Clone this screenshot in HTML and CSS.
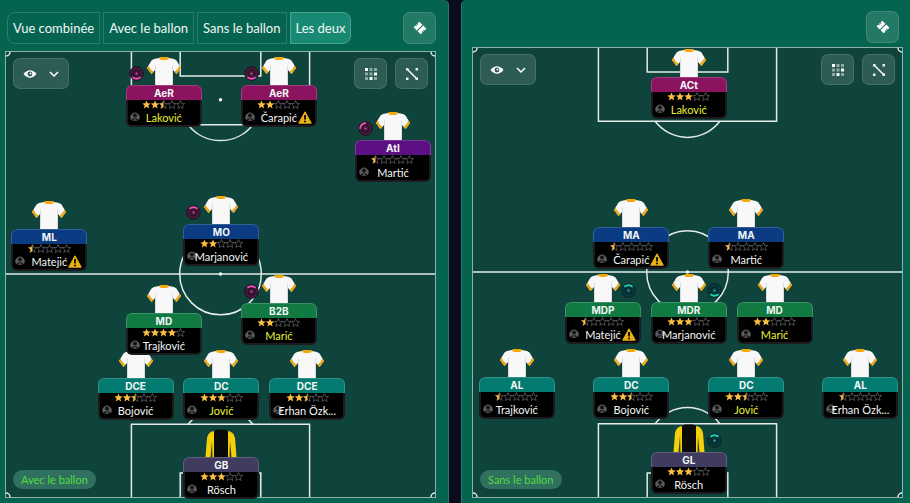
FILE: index.html
```html
<!DOCTYPE html>
<html lang="fr">
<head>
    <meta charset="UTF-8" />
    <meta name="viewport" content="width=device-width, initial-scale=1.0" />
    <title>Tactique</title>
    <link rel="stylesheet" href="styles.css">
</head>
<body>

    <svg class="sprite" aria-hidden="true">
        <symbol id="shirt" viewBox="0 0 34 28">
            <path d="M12 1 L7 2 Q4 3 3 6 L0 11 L4.500 17 L8 13 V28 H26 V13 L29.500 17 L34 11 L31 6 Q30 3 27 2 L22 1 Z" fill="#f8f8f8" />
            <path d="M8 8 V28 H9 V9 Z M26 8 V28 H25 V9 Z" fill="#dcdcdf" />
            <path d="M1.500 8.500 L0 11 L4.500 17 L6.500 15 Q3 12.500 1.500 8.500 Z M32.500 8.500 L34 11 L29.500 17 L27.500 15 Q31 12.500 32.500 8.500 Z" fill="#f0a30c" />
            <path d="M12.500 0 H21.500 V2.200 Q17 4 12.500 2.200 Z" fill="#f5a60a" />
        </symbol>
        <symbol id="shirt-gk" viewBox="0 0 34 28">
            <path d="M10 2 Q4 3 3 9 L1.500 28 H10 Z M24 2 Q30 3 31 9 L32.500 28 H24 Z" fill="#f5cf08" />
            <path d="M8 12 L6.500 28 H8.500 Z M26 12 L27.500 28 H25.500 Z" fill="#27431e" />
            <path d="M13 0.500 H21 L24 2 V28 H10 V2 Z" fill="#0b0b0a" />
        </symbol>
        <symbol id="star" viewBox="0 0 10 10">
            <path d="M5 0.600 L6.300 3.700 L9.600 3.900 L7.100 6.100 L7.900 9.400 L5 7.600 L2.100 9.400 L2.900 6.100 L0.400 3.900 L3.700 3.700 Z" />
        </symbol>
        <symbol id="star-half" viewBox="0 0 10 10">
            <path d="M5 0.600 V7.600 L2.100 9.400 L2.900 6.100 L0.400 3.900 L3.700 3.700 Z" />
        </symbol>
        <symbol id="head" viewBox="0 0 10 10">
            <path d="M1.400 9.200 A4.600 4.600 0 1 1 8.600 9.200 L6.800 7.400 H3.200 Z" fill="#5c5c5e" />
            <circle cx="5" cy="4.600" r="2" fill="#151515" />
            <path d="M2.300 9.700 Q5 6.400 7.700 9.700 Z" fill="#5c5c5e" />
        </symbol>
        <symbol id="warning" viewBox="0 0 14 13">
            <path d="M7 0.800 L13.300 12.200 H0.700 Z" fill="#e9b012" stroke="#e9b012" stroke-width="1" stroke-linejoin="round" />
            <path d="M7 4 V8.400" stroke="#1c1604" stroke-width="2" />
            <circle cx="7" cy="10.500" r="1.100" fill="#1c1604" />
        </symbol>
        <symbol id="eye" viewBox="0 0 14 8">
            <path d="M0.500 4 Q7 -3.500 13.500 4 Q7 11.500 0.500 4 Z" fill="#fff" />
            <circle cx="7" cy="4" r="2.400" fill="#2b5a53" />
            <circle cx="7.500" cy="3.500" r="1" fill="#fff" />
        </symbol>
        <symbol id="chevron" viewBox="0 0 10 6">
            <path d="M1 1 L5 5 L9 1" fill="none" stroke="#fff" stroke-width="1.500" />
        </symbol>
        <symbol id="dots" viewBox="0 0 12 12">
            <path d="M0 0 H3 V3 H0 Z M9 4.500 H12 V7.500 H9 Z M4.500 9 H7.500 V12 H4.500 Z" fill="#fff" />
            <path d="M4.500 0 H7.500 V3 H4.500 Z M9 0 H12 V3 H9 Z M0 4.500 H3 V7.500 H0 Z M4.500 4.500 H7.500 V7.500 H4.500 Z M0 9 H3 V12 H0 Z M9 9 H12 V12 H9 Z" fill="#8fa9a4" />
        </symbol>
        <symbol id="link" viewBox="0 0 12 12">
            <path d="M1.500 1.500 L10.500 10.500" stroke="#fff" stroke-width="1.400" />
            <path d="M0 0 H2.500 V2.500 H0 Z M9.500 0 H12 V2.500 H9.500 Z M0 9.500 H2.500 V12 H0 Z M9.500 9.500 H12 V12 H9.500 Z" fill="#e9f0ee" />
        </symbol>
        <symbol id="ticket" viewBox="0 0 14 14">
            <g transform="rotate(45 7 7)">
                <path d="M2 3 H6.400 V11 H2 V8.600 H3.200 V7.600 H2 V6.400 H3.200 V5.400 H2 Z M7.600 3 H12 V5.400 H10.800 V6.400 H12 V7.600 H10.800 V8.600 H12 V11 H7.600 Z" fill="#fff" />
            </g>
        </symbol>
        <symbol id="lines" viewBox="0 0 431 447" preserveAspectRatio="none">
            <g fill="none" stroke="#e3ece9" stroke-width="1.500">
                <path d="M126 0 V73 H305 V0 M175 0 V24 H256 V0" />
                <path d="M183 73 A41 41 0 0 0 248 73" />
                <path d="M0 223 H431" />
                <circle cx="215.500" cy="223" r="41" />
                <path d="M126 447 V374 H305 V447 M175 447 V423 H256 V447" />
                <path d="M183 374 A41 41 0 0 1 248 374" />
                <path d="M4 0 A4 4 0 0 1 0 4 M427 0 A4 4 0 0 0 431 4 M0 443 A4 4 0 0 1 4 447 M431 443 A4 4 0 0 0 427 447" />
            </g>
            <circle cx="215.500" cy="48" r="1.700" fill="#fff" />
            <circle cx="215.500" cy="223" r="1.700" fill="#fff" />
        </symbol>
    </svg>

    <main class="panels">
        <section class="panel panel-with">
            <header>
                <nav class="tabs">
                    <button class="tab-btn">Vue combinée</button>
                    <button class="tab-btn">Avec le ballon</button>
                    <button class="tab-btn">Sans le ballon</button>
                    <button class="tab-btn active">Les deux</button>
                </nav>
                <button class="icon-btn" aria-label="Tactique"><svg width="14" height="14"><use href="#ticket" /></svg></button>
            </header>
            <div class="pitch">
                <svg class="lines" aria-hidden="true"><use href="#lines" /></svg>
                <ul class="players" id="with-ball"></ul>
                <div class="tools">
                    <button class="icon-btn view-btn" aria-label="Affichage">
                        <svg width="14" height="8"><use href="#eye" /></svg>
                        <svg width="10" height="6"><use href="#chevron" /></svg>
                    </button>
                    <button class="icon-btn" aria-label="Grille"><svg width="12" height="12"><use href="#dots" /></svg></button>
                    <button class="icon-btn" aria-label="Liens"><svg width="12" height="12"><use href="#link" /></svg></button>
                </div>
                <span class="phase">Avec le ballon</span>
            </div>
        </section>

        <section class="panel panel-without">
            <header>
                <button class="icon-btn" aria-label="Tactique"><svg width="14" height="14"><use href="#ticket" /></svg></button>
            </header>
            <div class="pitch">
                <svg class="lines" aria-hidden="true"><use href="#lines" /></svg>
                <ul class="players" id="without-ball"></ul>
                <div class="tools">
                    <button class="icon-btn view-btn" aria-label="Affichage">
                        <svg width="14" height="8"><use href="#eye" /></svg>
                        <svg width="10" height="6"><use href="#chevron" /></svg>
                    </button>
                    <button class="icon-btn" aria-label="Grille"><svg width="12" height="12"><use href="#dots" /></svg></button>
                    <button class="icon-btn" aria-label="Liens"><svg width="12" height="12"><use href="#link" /></svg></button>
                </div>
                <span class="phase">Sans le ballon</span>
            </div>
        </section>
    </main>

    <script src="script.js"></script>
</body>
</html>
```

FILE: styles.css
```css
:root {
    --panel: #046450;
    --pitch: #0e443b;
    --bg: #080c1d;
    --text: #f3f6f5;
    --picked: #e8f032;
}

* {
    box-sizing: border-box;
}

body {
    font-family: Lato, "Noto Sans", sans-serif;
    background: var(--bg);
    color: var(--text);
    margin: 0;
}

button {
    font: inherit;
    color: inherit;
    cursor: pointer;
}

svg {
    display: block;
}

.sprite {
    position: absolute;
    width: 0;
    height: 0;
}

.panels {
    display: grid;
    grid-template-columns: 1fr 1fr;
    gap: 12px;
    min-height: 100vh;
}

.panel {
    display: flex;
    flex-direction: column;
    background: var(--panel);
}

.panel-with {
    padding: 12px 12px 5px 5px;
    border-right: 1px solid #2c7967;
    border-top-right-radius: 5px;
}

.panel-without {
    padding: 11px 7px 5px 10px;
    border-left: 1px solid #2c7967;
    border-top-left-radius: 5px;
}

header {
    display: flex;
    justify-content: space-between;
    align-items: center;
}

.panel-with header {
    padding: 0 0 7px 2px;
}

.panel-without header {
    justify-content: flex-end;
    padding: 0 4px 4px 0;
}

.tabs {
    display: flex;
    gap: 3px;
}

.tab-btn {
    height: 32px;
    padding: 0 5px;
    font-size: 13px;
    white-space: nowrap;
    background: transparent;
    border: 1px solid #2a7b69;
}

.tab-btn:first-child {
    border-radius: 8px 0 0 8px;
}

.tab-btn:last-child {
    border-radius: 0 8px 8px 0;
}

.tab-btn.active {
    background: #188a74;
    border-color: #47a390;
}

.icon-btn {
    display: flex;
    justify-content: center;
    align-items: center;
    width: 33px;
    height: 32px;
    padding: 0;
    background: rgba(255, 255, 255, 0.13);
    border: 1px solid rgba(255, 255, 255, 0.12);
    border-radius: 7px;
}

/* pitch */
.pitch {
    position: relative;
    flex: 1;
    display: flex;
    flex-direction: column;
    justify-content: space-between;
    align-items: flex-start;
    min-height: 440px;
    padding: 6px 7px 8px;
    background: var(--pitch);
    border: 1px solid #8fb1a7;
}

.lines {
    position: absolute;
    inset: 0;
    width: 100%;
    height: 100%;
}

.tools {
    position: relative;
    display: flex;
    gap: 8px;
    width: 100%;
}

.tools .icon-btn {
    height: 31px;
}

.tools .view-btn {
    width: 56px;
    gap: 12px;
    margin-right: auto;
}

.phase {
    position: relative;
    padding: 0 8px;
    font-size: 11px;
    line-height: 19px;
    color: #52dc3e;
    background: #30705f;
    border-radius: 10px;
}

/* players */
.players {
    position: absolute;
    inset: 0;
    margin: 0;
    padding: 0;
    list-style: none;
}

.player {
    position: absolute;
    display: flex;
    flex-direction: column;
    align-items: center;
    width: 76px;
    transform: translateX(-50%);
}

.card {
    position: relative;
    width: 100%;
    height: 42px;
    background: #000;
    border: 2px solid #1d1b1e;
    border-top: 0;
    border-radius: 6px;
    text-align: center;
}

.role {
    margin: 0 -2px;
    border: 1px solid rgba(255, 255, 255, 0.18);
    border-bottom: 0;
    border-radius: 6px 6px 0 0;
    font: bold 10px/14px Inter, "Liberation Sans", sans-serif;
}

.role.att { background: #8b1360; }
.role.ati { background: #5d1083; }
.role.mid { background: #0a3b83; }
.role.cen { background: #107a42; }
.role.def { background: #047b70; }
.role.gk { background: #403c60; }

.stars {
    margin: 0 auto;
}

.name {
    position: relative;
    display: block;
    font-size: 11px;
    line-height: 17px;
    white-space: nowrap;
}

.name.picked {
    color: var(--picked);
}

.head {
    position: absolute;
    left: 2px;
    bottom: 4px;
}

.warning {
    position: absolute;
    right: 3px;
    bottom: 1px;
}

.duty {
    position: absolute;
    top: 9px;
}

.duty.left {
    left: 3px;
}

.duty.right {
    right: 5px;
}
```

FILE: script.js
```js
// x, y: centre of the shirt collar, in % of the pitch. Back line first, so the rows above lie over it.
const withBall = [
    { role: 'GB', kind: 'gk', name: 'Rösch', stars: 3, x: 50.2, y: 84.8 },
    { role: 'DCE', kind: 'def', name: 'Bojović', stars: 2.5, x: 30.2, y: 66.9 },
    { role: 'DC', kind: 'def', name: 'Jović', stars: 3, x: 50.2, y: 66.9, picked: true },
    { role: 'DCE', kind: 'def', name: 'Erhan Özk...', stars: 2.5, x: 70.2, y: 66.9 },
    { role: 'MD', kind: 'cen', name: 'Trajković', stars: 4, x: 36.8, y: 52.3 },
    { role: 'B2B', kind: 'cen', name: 'Marić', stars: 2, x: 63.6, y: 50.1, picked: true, duty: 0 },
    { role: 'ML', kind: 'mid', name: 'Matejić', stars: 0.5, x: 10.1, y: 33.4, warning: true },
    { role: 'MO', kind: 'mid', name: 'Marjanović', stars: 2, x: 50.2, y: 32.4, duty: 0 },
    { role: 'AtI', kind: 'ati', name: 'Martić', stars: 0.5, x: 90.2, y: 13.4, duty: -45 },
    { role: 'AeR', kind: 'att', name: 'Laković', stars: 2.5, x: 36.8, y: 1.1, picked: true, duty: 180 },
    { role: 'AeR', kind: 'att', name: 'Čarapić', stars: 2, x: 63.6, y: 1.1, warning: true, duty: 180 }
];

const withoutBall = [
    { role: 'GL', kind: 'gk', name: 'Rösch', stars: 3, x: 50.3, y: 83.7, duty: 0 },
    { role: 'AL', kind: 'def', name: 'Trajković', stars: 0.5, x: 10.2, y: 67.1 },
    { role: 'DC', kind: 'def', name: 'Bojović', stars: 2.5, x: 36.9, y: 67.1 },
    { role: 'DC', kind: 'def', name: 'Jović', stars: 2.5, x: 63.7, y: 67.1, picked: true },
    { role: 'AL', kind: 'def', name: 'Erhan Özk...', stars: 0.5, x: 90.3, y: 67.1 },
    { role: 'MDP', kind: 'cen', name: 'Matejić', stars: 0.5, x: 30.3, y: 50.4, warning: true, duty: 0 },
    { role: 'MDR', kind: 'cen', name: 'Marjanović', stars: 3, x: 50.3, y: 50.4, duty: 180 },
    { role: 'MD', kind: 'cen', name: 'Marić', stars: 2, x: 70.3, y: 50.4, picked: true },
    { role: 'MA', kind: 'mid', name: 'Čarapić', stars: 0.5, x: 36.9, y: 33.6, warning: true },
    { role: 'MA', kind: 'mid', name: 'Martić', stars: 0.5, x: 63.7, y: 33.6 },
    { role: 'ACt', kind: 'att', name: 'Laković', stars: 3, x: 50.3, y: 0.3, picked: true }
];

function icon(id, cls, w, h) {
    return `<svg class="${cls}" width="${w}" height="${h}" aria-hidden="true"><use href="#${id}" /></svg>`;
}

function stars(value) {
    let out = '';
    for (let i = 0; i < 5; i++) {
        const pos = `x="${i * 8.5}" y="0" width="9" height="9"`;
        if (value >= i + 1) {
            out += `<use href="#star" ${pos} fill="#fcbf42" />`;
        } else {
            out += `<use href="#star" ${pos} fill="none" stroke="#77787c" stroke-width="0.7" />`;
            if (value > i) out += `<use href="#star-half" ${pos} fill="#fcbf42" />`;
        }
    }
    return `<svg class="stars" width="43" height="9" role="img" aria-label="${value} / 5">${out}</svg>`;
}

// angle: where the lit arc of the badge points
function duty(angle, side) {
    const c = side === 'left' ? ['#451a3c', '#220d20', '#e64fb4'] : ['#0b3a3c', '#06222a', '#1fd3ae'];
    return `<svg class="duty ${side}" width="15" height="15" viewBox="0 0 15 15" aria-hidden="true">
        <circle cx="7.5" cy="7.5" r="6.8" fill="${c[0]}" stroke="${c[1]}" />
        <circle cx="7.5" cy="7.5" r="3.6" fill="none" stroke="${c[1]}" />
        <circle cx="7.5" cy="7.5" r="0.9" fill="${c[2]}" />
        <path d="M3.4 3.8 Q7.5 0.6 11.6 3.8" fill="none" stroke="${c[2]}" stroke-width="1.8" transform="rotate(${angle} 7.5 7.5)" />
    </svg>`;
}

function render(id, players, side) {
    document.getElementById(id).innerHTML = players.map(p => `
        <li class="player" style="left: ${p.x}%; top: ${p.y}%">
            ${p.duty !== undefined ? duty(p.duty, side) : ''}
            ${icon(p.kind === 'gk' ? 'shirt-gk' : 'shirt', 'shirt', 34, 28)}
            <div class="card">
                <div class="role ${p.kind}">${p.role}</div>
                ${stars(p.stars)}
                ${icon('head', 'head', 10, 10)}
                <span class="name ${p.picked ? 'picked' : ''}">${p.name}</span>
                ${p.warning ? icon('warning', 'warning', 14, 13) : ''}
            </div>
        </li>`).join('');
}

render('with-ball', withBall, 'left');
render('without-ball', withoutBall, 'right');
```
